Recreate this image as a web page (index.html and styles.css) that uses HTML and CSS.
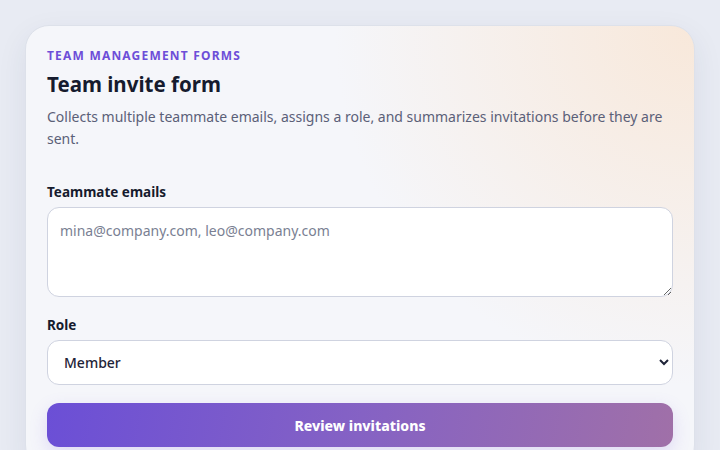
FILE: index.html
```html
<!DOCTYPE html>
<html lang="en">
<head>
    <meta charset="UTF-8">
    <meta name="viewport" content="width=device-width, initial-scale=1.0">
    <title>Team invite form</title>
    <link rel="stylesheet" href="styles.css">
</head>
<body>

    <main class="card">
        <p class="eyebrow">Team management forms</p>
        <h1>Team invite form</h1>
        <p class="lead">Collects multiple teammate emails, assigns a role, and summarizes invitations before they are sent.</p>

        <form class="invite-form">
            <div class="field">
                <label for="emails">Teammate emails</label>
                <textarea id="emails" placeholder="mina@company.com, leo@company.com"></textarea>
            </div>

            <div class="field">
                <label for="role">Role</label>
                <select id="role">
                    <option>Member</option>
                    <option>Admin</option>
                    <option>Viewer</option>
                </select>
            </div>

            <button type="button" class="primary">Review invitations</button>
        </form>
    </main>

</body>
</html>
```

FILE: styles.css
```css
body {
    font-family: 'Noto Sans', 'Open Sans', sans-serif;
    margin: 0;
    padding: 25px;
    background-color: #e8ebf3;
    color: #161b2e;
}

.card {
    border: 1px solid #dde1ea;
    border-radius: 24px;
    padding: 22px 21px 21px;
    background:
        radial-gradient(circle at 100% 0%, rgba(248, 232, 218, 1) 0, rgba(248, 232, 218, 0) 360px),
        #f5f6fa;
    box-shadow: 0 10px 30px rgba(40, 50, 90, 0.08);
}

.eyebrow {
    margin: 0;
    font-size: 12px;
    line-height: 16px;
    font-weight: 700;
    letter-spacing: 0.1em;
    text-transform: uppercase;
    color: #6d4ed8;
}

h1 {
    margin: 5px 0 0;
    font-size: 20.5px;
    line-height: 30px;
    font-weight: 700;
}

.lead {
    margin: 7px 0 0;
    font-size: 14px;
    line-height: 22px;
    color: #5b6078;
}

.invite-form {
    display: flex;
    flex-direction: column;
    gap: 18px;
    margin-top: 32px;
}

.field {
    display: flex;
    flex-direction: column;
    gap: 5px;
}

.field label {
    font-size: 13.5px;
    line-height: 20px;
    font-weight: 700;
}

textarea,
select {
    font-family: inherit;
    font-size: 14px;
    border: 1px solid #cfd3e0;
    border-radius: 12px;
    background-color: #fff;
    color: #1f2438;
    box-sizing: border-box;
    width: 100%;
}

textarea {
    height: 90px;
    padding: 12px 12px;
    line-height: 22px;
    resize: vertical;
}

textarea::placeholder {
    color: #7a7f93;
}

select {
    height: 45px;
    padding: 0 12px;
    font-weight: 500;
}

button.primary {
    height: 44px;
    border: none;
    border-radius: 12px;
    font-family: inherit;
    font-size: 14px;
    font-weight: 800;
    color: #fff;
    cursor: pointer;
    background: linear-gradient(100deg, #6b4fd6 0%, #8562c4 50%, #a070a8 100%);
    box-shadow: 0 6px 18px rgba(120, 90, 220, 0.18);
}
```
